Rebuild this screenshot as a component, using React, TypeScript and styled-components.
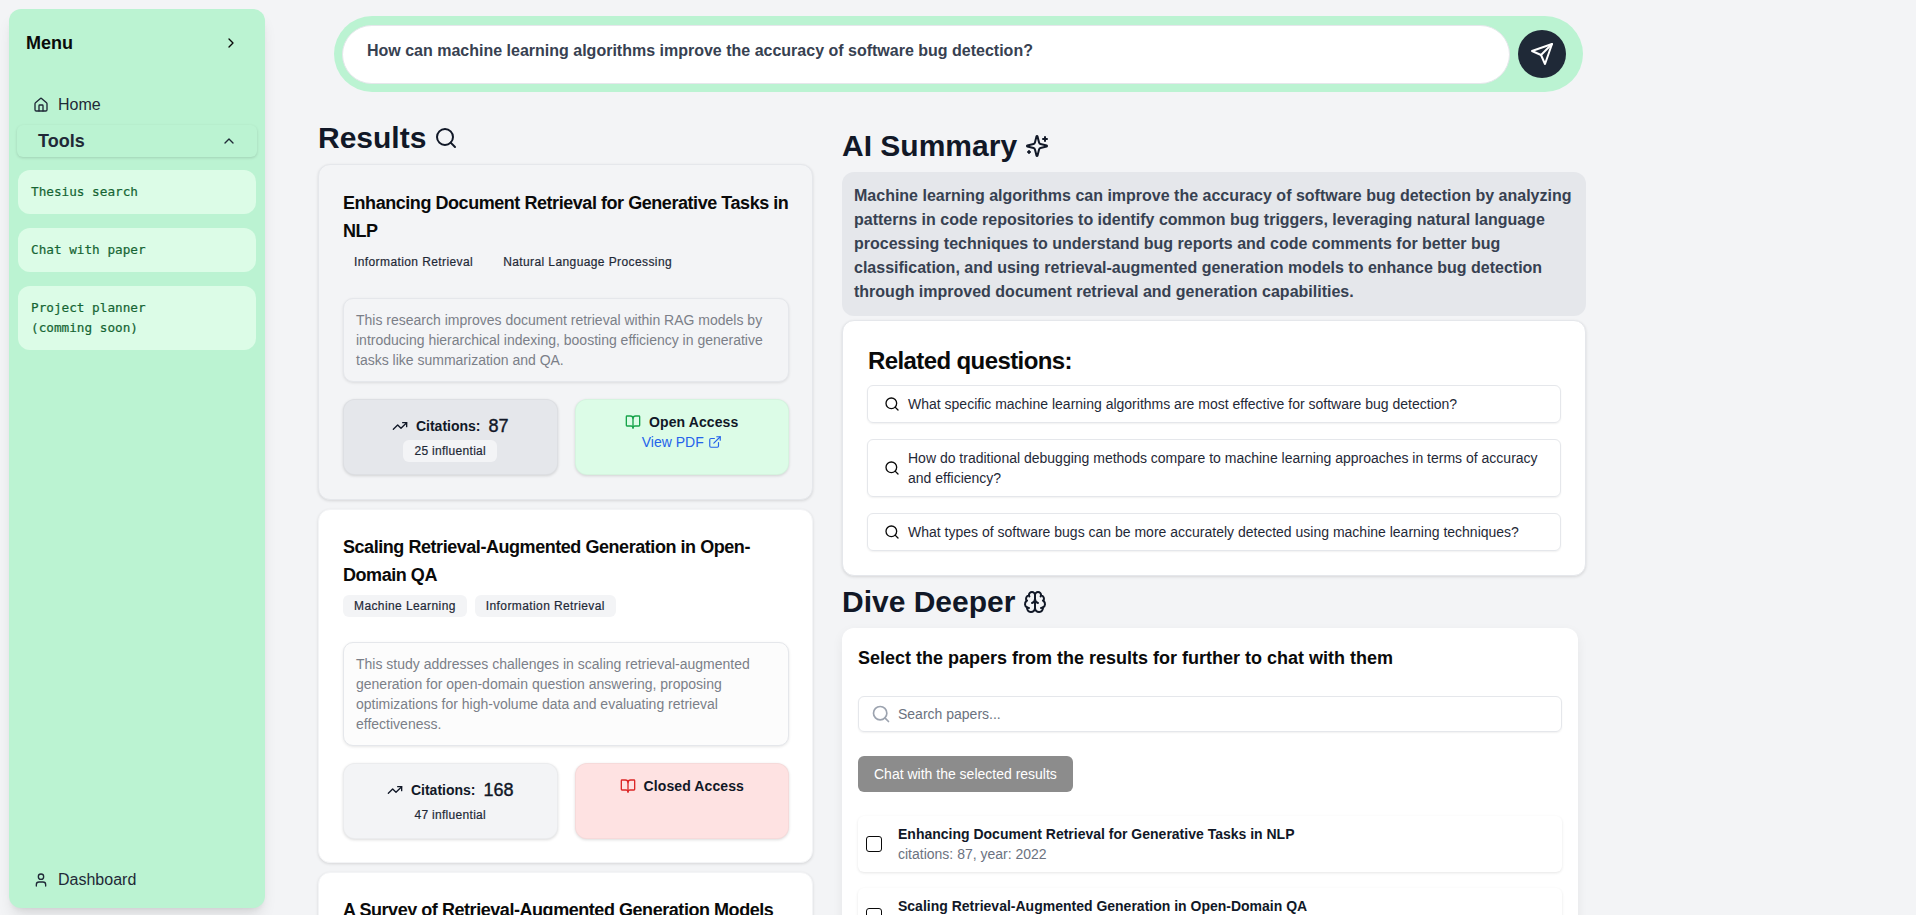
import styled, { createGlobalStyle } from "styled-components";
import {
  BookOpen,
  ChevronRight,
  ChevronUp,
  ExternalLink,
  House,
  Search,
  TrendingUp,
  User,
} from "lucide-react";

const GlobalStyle = createGlobalStyle`
  html, body {
    margin: 0;
    height: 100%;
    overflow: hidden;
    background: #f3f4f6;
    font-family: "Liberation Sans", Arial, sans-serif;
  }
  * {
    box-sizing: border-box;
  }
`;

const Page = styled.div`
  display: flex;
  height: 915px;
  padding: 9px 0 7px 9px;
  overflow: hidden;
`;

const Sidebar = styled.aside`
  flex: 0 0 256px;
  display: flex;
  flex-direction: column;
  background: #bbf3d2;
  border-radius: 12px;
  padding: 20px 8px 16px;
  box-shadow: 0 10px 15px -3px rgba(0, 0, 0, 0.1), 0 4px 6px -4px rgba(0, 0, 0, 0.1);
`;

const MenuHead = styled.div`
  display: flex;
  align-items: center;
  justify-content: space-between;
  height: 28px;
  padding: 0 18px 0 9px;
  font-size: 18px;
  font-weight: 700;
  color: #0a0a0a;
`;

const NavLink = styled.div`
  display: flex;
  align-items: center;
  gap: 9px;
  height: 24px;
  padding-left: 16px;
  font-size: 16px;
  color: #1f2937;
`;

const HomeLink = styled(NavLink)`
  margin-top: 36px;
`;

const DashLink = styled(NavLink)`
  margin-top: auto;
`;

const ToolsHead = styled.div`
  display: flex;
  align-items: center;
  justify-content: space-between;
  height: 32px;
  margin-top: 8px;
  padding: 0 20px 0 21px;
  border-radius: 6px;
  font-size: 18px;
  font-weight: 700;
  color: #1f2937;
  box-shadow: 0 1px 3px rgba(0, 0, 0, 0.14);
`;

const ToolList = styled.div`
  display: flex;
  flex-direction: column;
  gap: 14px;
  margin: 13px 1px 0;
`;

const ToolItem = styled.div`
  padding: 12px 13px;
  border-radius: 12px;
  background: #dcfce7;
  color: #166534;
  font-family: "DejaVu Sans Mono", "Liberation Mono", monospace;
  font-size: 12.7px;
  line-height: 20px;
  -webkit-text-stroke: 0.2px currentColor;
`;

const Main = styled.main`
  flex: 1;
  min-width: 0;
  padding: 7px 0 0 53px;
`;

const AskBar = styled.div`
  display: flex;
  align-items: center;
  width: 1249px;
  height: 76px;
  margin-left: 16px;
  padding: 0 17px 0 8px;
  gap: 8px;
  border-radius: 38px;
  background: #bbf3d2;
`;

const AskBox = styled.div`
  flex: 1;
  height: 59px;
  padding: 13px 24px;
  border: 1px solid #e5e7eb;
  border-radius: 30px;
  background: #fff;
  font-size: 16px;
  font-weight: 700;
  line-height: 24px;
  color: #374151;
`;

const SendButton = styled.button`
  display: flex;
  align-items: center;
  justify-content: center;
  flex: 0 0 48px;
  height: 48px;
  padding: 0;
  border: 0;
  border-radius: 50%;
  background: #1f2937;
  color: #fff;
`;

const Columns = styled.div`
  display: flex;
  align-items: flex-start;
  gap: 29px;
  margin-top: 28px;
`;

const LeftColumn = styled.section`
  flex: 0 0 495px;
  display: flex;
  flex-direction: column;
`;

const RightColumn = styled.section`
  flex: 0 0 744px;
  display: flex;
  flex-direction: column;
  padding-top: 8px;
`;

const Heading = styled.h2`
  display: flex;
  align-items: center;
  gap: 8px;
  margin: 0 0 8px;
  font-size: 30px;
  font-weight: 700;
  line-height: 36px;
  color: #111827;

  svg {
    color: #111827;
  }
`;

const PaperList = styled.div`
  display: flex;
  flex-direction: column;
  gap: 9px;
`;

const Card = styled.article<{ $active?: boolean }>`
  padding: ${(p) => (p.$active ? "24px" : "23px")} 23px ${(p) => (p.$active ? "24px" : "23px")} 24px;
  border: 1px solid ${(p) => (p.$active ? "#e5e7eb" : "#f3f4f6")};
  border-radius: 12px;
  background: ${(p) => (p.$active ? "#f3f4f6" : "#fff")};
  box-shadow: 0 1px 3px rgba(0, 0, 0, 0.12);
`;

const CardTitle = styled.h3`
  margin: 0;
  font-size: 18px;
  font-weight: 700;
  line-height: 28px;
  letter-spacing: -0.45px;
  color: #0a0a0a;
`;

const TagRow = styled.div`
  display: flex;
  gap: 8px;
  margin-top: 6px;
`;

const Tag = styled.span<{ $active?: boolean }>`
  padding: 0 11px;
  border-radius: 6px;
  background: ${(p) => (p.$active ? "transparent" : "#f3f4f6")};
  font-size: 12px;
  line-height: 22px;
  letter-spacing: 0.4px;
  color: #1f2937;
  -webkit-text-stroke: 0.2px currentColor;
`;

const Abstract = styled.p<{ $active?: boolean }>`
  margin: 25px 0 0;
  padding: 11px 12px;
  border: 1px solid #e5e7eb;
  border-radius: 10px;
  background: ${(p) => (p.$active ? "#f3f4f6" : "#fcfcfc")};
  box-shadow: 0 1px 3px rgba(0, 0, 0, 0.1);
  font-size: 14px;
  line-height: 20px;
  color: #7b7f88;
`;

const StatGrid = styled.div`
  display: grid;
  grid-template-columns: 1fr 1fr;
  gap: 17px;
  margin-top: 17px;
`;

const Stat = styled.div<{ $tone: string }>`
  display: flex;
  flex-direction: column;
  align-items: center;
  height: 76px;
  padding-top: 12px;
  border: 1px solid rgba(0, 0, 0, 0.03);
  border-radius: 12px;
  background: ${(p) => p.$tone};
  box-shadow: 0 1px 3px rgba(0, 0, 0, 0.14);
`;

const CitationRow = styled.div`
  display: flex;
  align-items: center;
  gap: 8px;
  height: 28px;
  font-size: 14px;
  font-weight: 700;
  color: #111827;
`;

const CitationCount = styled.span`
  font-size: 18px;
  font-weight: 400;
  -webkit-text-stroke: 0.4px currentColor;
`;

const Influential = styled.span`
  padding: 0 11px;
  border-radius: 6px;
  background: #f3f4f6;
  font-size: 12px;
  line-height: 22px;
  letter-spacing: 0.3px;
  color: #1f2937;
  -webkit-text-stroke: 0.2px currentColor;
`;

const AccessRow = styled.div`
  display: flex;
  align-items: center;
  gap: 8px;
  height: 20px;
  font-size: 14px;
  font-weight: 700;
  line-height: 20px;
  letter-spacing: 0.1px;
  color: #111827;
`;

const PdfLink = styled.a`
  display: flex;
  align-items: center;
  gap: 4px;
  font-size: 14px;
  line-height: 20px;
  color: #2563eb;
`;

const SummaryBox = styled.p`
  margin: 0;
  padding: 12px;
  border-radius: 12px;
  background: #e5e7eb;
  font-size: 16px;
  font-weight: 700;
  line-height: 24px;
  color: #374151;
`;

const RelatedCard = styled.div`
  margin-top: 4px;
  padding: 24px;
  border: 1px solid #e5e7eb;
  border-radius: 12px;
  background: #fff;
  box-shadow: 0 1px 3px rgba(0, 0, 0, 0.12);
`;

const RelatedTitle = styled.h3`
  margin: 0 0 8px 1px;
  font-size: 24px;
  font-weight: 700;
  line-height: 32px;
  letter-spacing: -0.6px;
  color: #0a0a0a;
`;

const QuestionList = styled.div`
  display: flex;
  flex-direction: column;
  gap: 16px;
`;

const Question = styled.div`
  display: flex;
  align-items: center;
  gap: 8px;
  padding: 8px 16px;
  border: 1px solid #e5e7eb;
  border-radius: 6px;
  box-shadow: 0 1px 2px rgba(0, 0, 0, 0.06);
  font-size: 14px;
  line-height: 20px;
  color: #1f2937;

  svg {
    flex: 0 0 16px;
    color: #0a0a0a;
  }
`;

const DiveHeading = styled(Heading)`
  margin-top: 8px;
`;

const DiveCard = styled.div`
  width: 736px;
  padding: 18px 16px 16px;
  border-radius: 12px;
  background: #fff;
  box-shadow: 0 4px 12px rgba(0, 0, 0, 0.06);
`;

const DiveTitle = styled.h3`
  margin: 0;
  font-size: 18px;
  font-weight: 700;
  line-height: 24px;
  color: #0a0a0a;
`;

const PaperSearch = styled.div`
  display: flex;
  align-items: center;
  gap: 7px;
  height: 36px;
  margin-top: 26px;
  padding: 0 12px;
  border: 1px solid #e5e7eb;
  border-radius: 6px;
  box-shadow: 0 1px 2px rgba(0, 0, 0, 0.06);
  font-size: 14px;
  color: #6b7280;

  svg {
    color: #9ca3af;
  }
`;

const ChatButton = styled.button`
  display: block;
  height: 36px;
  margin-top: 24px;
  padding: 0 16px;
  border: 0;
  border-radius: 6px;
  background: #8c8c8c;
  font-family: inherit;
  font-size: 14px;
  color: #fff;
`;

const PaperRows = styled.div`
  display: flex;
  flex-direction: column;
  gap: 16px;
  margin-top: 24px;
`;

const PaperRow = styled.label`
  display: flex;
  align-items: center;
  gap: 16px;
  height: 56px;
  padding: 0 8px;
  border-radius: 6px;
  box-shadow: 0 1px 3px rgba(0, 0, 0, 0.1);
`;

const Check = styled.span`
  flex: 0 0 16px;
  height: 16px;
  border: 1.5px solid #0a0a0a;
  border-radius: 3px;
`;

const RowTitle = styled.div`
  font-size: 14px;
  font-weight: 700;
  line-height: 20px;
  color: #111827;
`;

const RowMeta = styled.div`
  font-size: 14px;
  line-height: 20px;
  color: #6b7280;
`;

const Glyph = styled.svg.attrs({
  width: 24,
  height: 24,
  viewBox: "0 0 24 24",
  fill: "none",
  stroke: "currentColor",
  strokeWidth: 2,
  strokeLinecap: "round",
  strokeLinejoin: "round",
})``;

// the reference uses an older lucide set, these three differ from the package
const SendGlyph = () => (
  <Glyph>
    <path d="m22 2-7 20-4-9-9-4Z" />
    <path d="M22 2 11 13" />
  </Glyph>
);

const SparklesGlyph = () => (
  <Glyph>
    <path d="M9.937 15.5A2 2 0 0 0 8.5 14.063l-6.135-1.582a.5.5 0 0 1 0-.962L8.5 9.936A2 2 0 0 0 9.937 8.5l1.582-6.135a.5.5 0 0 1 .963 0L14.063 8.5A2 2 0 0 0 15.5 9.937l6.135 1.581a.5.5 0 0 1 0 .964L15.5 14.063a2 2 0 0 0-1.437 1.437l-1.582 6.135a.5.5 0 0 1-.963 0z" />
    <path d="M20 3v4" />
    <path d="M22 5h-4" />
    <path d="M4 17v2" />
    <path d="M5 18H3" />
  </Glyph>
);

const BrainGlyph = () => (
  <Glyph>
    <path d="M12 5a3 3 0 1 0-5.997.125 4 4 0 0 0-2.526 5.77 4 4 0 0 0 .556 6.588A4 4 0 1 0 12 18Z" />
    <path d="M12 5a3 3 0 1 1 5.997.125 4 4 0 0 1 2.526 5.77 4 4 0 0 1-.556 6.588A4 4 0 1 1 12 18Z" />
    <path d="M15 13a4.5 4.5 0 0 1-3-4 4.5 4.5 0 0 1-3 4" />
    <path d="M17.599 6.5a3 3 0 0 0 .399-1.375" />
    <path d="M6.003 5.125A3 3 0 0 0 6.401 6.5" />
    <path d="M3.477 10.896a4 4 0 0 1 .585-.396" />
    <path d="M19.938 10.5a4 4 0 0 1 .585.396" />
    <path d="M6 18a4 4 0 0 1-1.967-.516" />
    <path d="M19.967 17.484A4 4 0 0 1 18 18" />
  </Glyph>
);

type Paper = {
  title: string;
  tags: string[];
  summary: string;
  citations: number;
  influential: number;
  open: boolean;
  year: number;
};

const papers: Paper[] = [
  {
    title: "Enhancing Document Retrieval for Generative Tasks in NLP",
    tags: ["Information Retrieval", "Natural Language Processing"],
    summary:
      "This research improves document retrieval within RAG models by introducing hierarchical indexing, boosting efficiency in generative tasks like summarization and QA.",
    citations: 87,
    influential: 25,
    open: true,
    year: 2022,
  },
  {
    title: "Scaling Retrieval-Augmented Generation in Open-Domain QA",
    tags: ["Machine Learning", "Information Retrieval"],
    summary:
      "This study addresses challenges in scaling retrieval-augmented generation for open-domain question answering, proposing optimizations for high-volume data and evaluating retrieval effectiveness.",
    citations: 168,
    influential: 47,
    open: false,
    year: 2021,
  },
  {
    title: "A Survey of Retrieval-Augmented Generation Models",
    tags: ["Machine Learning"],
    summary: "",
    citations: 0,
    influential: 0,
    open: false,
    year: 2021,
  },
];

const questions = [
  "What specific machine learning algorithms are most effective for software bug detection?",
  "How do traditional debugging methods compare to machine learning approaches in terms of accuracy and efficiency?",
  "What types of software bugs can be more accurately detected using machine learning techniques?",
];

const PaperCard = ({ paper, active }: { paper: Paper; active: boolean }) => (
  <Card $active={active}>
    <CardTitle>{paper.title}</CardTitle>
    <TagRow>
      {paper.tags.map((tag) => (
        <Tag key={tag} $active={active}>
          {tag}
        </Tag>
      ))}
    </TagRow>
    <Abstract $active={active}>{paper.summary}</Abstract>
    <StatGrid>
      <Stat $tone={active ? "#e5e7eb" : "#f3f4f6"}>
        <CitationRow>
          <TrendingUp size={16} />
          Citations:
          <CitationCount>{paper.citations}</CitationCount>
        </CitationRow>
        <Influential>{paper.influential} influential</Influential>
      </Stat>
      <Stat $tone={paper.open ? "#dcfce7" : "#fee2e2"}>
        <AccessRow>
          <BookOpen size={16} color={paper.open ? "#16a34a" : "#dc2626"} />
          {paper.open ? "Open Access" : "Closed Access"}
        </AccessRow>
        {paper.open && (
          <PdfLink>
            View PDF <ExternalLink size={14} />
          </PdfLink>
        )}
      </Stat>
    </StatGrid>
  </Card>
);

export default function App() {
  return (
    <>
      <GlobalStyle />
      <Page>
        <Sidebar>
          <MenuHead>
            Menu
            <ChevronRight size={16} />
          </MenuHead>
          <HomeLink>
            <House size={16} />
            Home
          </HomeLink>
          <ToolsHead>
            Tools
            <ChevronUp size={16} />
          </ToolsHead>
          <ToolList>
            <ToolItem>Thesius search</ToolItem>
            <ToolItem>Chat with paper</ToolItem>
            <ToolItem>
              Project planner
              <br />
              (comming soon)
            </ToolItem>
          </ToolList>
          <DashLink>
            <User size={16} />
            Dashboard
          </DashLink>
        </Sidebar>
        <Main>
          <AskBar>
            <AskBox>How can machine learning algorithms improve the accuracy of software bug detection?</AskBox>
            <SendButton>
              <SendGlyph />
            </SendButton>
          </AskBar>
          <Columns>
            <LeftColumn>
              <Heading>
                Results <Search size={24} />
              </Heading>
              <PaperList>
                {papers.map((paper, i) => (
                  <PaperCard key={paper.title} paper={paper} active={i === 0} />
                ))}
              </PaperList>
            </LeftColumn>
            <RightColumn>
              <Heading>
                AI Summary <SparklesGlyph />
              </Heading>
              <SummaryBox>
                Machine learning algorithms can improve the accuracy of software bug detection by analyzing patterns in
                code repositories to identify common bug triggers, leveraging natural language processing techniques to
                understand bug reports and code comments for better bug classification, and using retrieval-augmented
                generation models to enhance bug detection through improved document retrieval and generation
                capabilities.
              </SummaryBox>
              <RelatedCard>
                <RelatedTitle>Related questions:</RelatedTitle>
                <QuestionList>
                  {questions.map((q) => (
                    <Question key={q}>
                      <Search size={16} />
                      {q}
                    </Question>
                  ))}
                </QuestionList>
              </RelatedCard>
              <DiveHeading>
                Dive Deeper <BrainGlyph />
              </DiveHeading>
              <DiveCard>
                <DiveTitle>Select the papers from the results for further to chat with them</DiveTitle>
                <PaperSearch>
                  <Search size={20} />
                  Search papers...
                </PaperSearch>
                <ChatButton>Chat with the selected results</ChatButton>
                <PaperRows>
                  {papers.slice(0, 2).map((paper) => (
                    <PaperRow key={paper.title}>
                      <Check />
                      <div>
                        <RowTitle>{paper.title}</RowTitle>
                        <RowMeta>
                          citations: {paper.citations}, year: {paper.year}
                        </RowMeta>
                      </div>
                    </PaperRow>
                  ))}
                </PaperRows>
              </DiveCard>
            </RightColumn>
          </Columns>
        </Main>
      </Page>
    </>
  );
}
